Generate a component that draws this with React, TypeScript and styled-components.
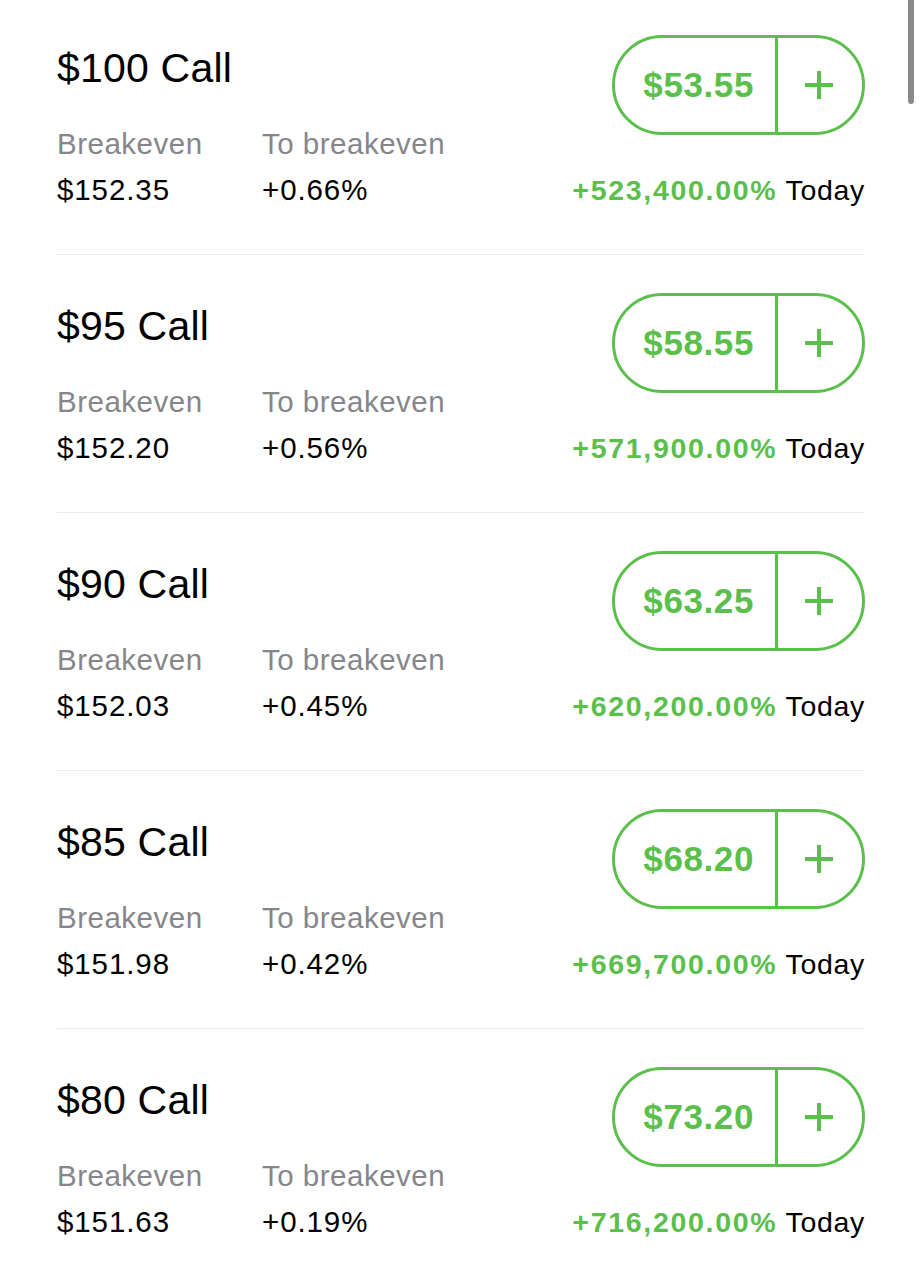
import React from 'react';
import styled, { createGlobalStyle } from 'styled-components';

const GlobalStyle = createGlobalStyle`
  body {
    margin: 0;
    background: #ffffff;
    font-family: 'Liberation Sans', Arial, sans-serif;
  }
`;

const GREEN = '#5bbf4b';

type Contract = {
  strike: string;
  breakeven: string;
  toBreakeven: string;
  price: string;
  change: string;
};

const contracts: Contract[] = [
  { strike: '$100', breakeven: '$152.35', toBreakeven: '+0.66%', price: '$53.55', change: '+523,400.00%' },
  { strike: '$95', breakeven: '$152.20', toBreakeven: '+0.56%', price: '$58.55', change: '+571,900.00%' },
  { strike: '$90', breakeven: '$152.03', toBreakeven: '+0.45%', price: '$63.25', change: '+620,200.00%' },
  { strike: '$85', breakeven: '$151.98', toBreakeven: '+0.42%', price: '$68.20', change: '+669,700.00%' },
  { strike: '$80', breakeven: '$151.63', toBreakeven: '+0.19%', price: '$73.20', change: '+716,200.00%' },
];

export default function App() {
  return (
    <Page>
      <GlobalStyle />
      <List>
        {contracts.map((c) => (
          <Row key={c.strike}>
            <Info>
              <Title>{c.strike} Call</Title>
              <Stats>
                <Label>Breakeven</Label>
                <Label>To breakeven</Label>
                <Value>{c.breakeven}</Value>
                <Value>{c.toBreakeven}</Value>
              </Stats>
            </Info>
            <Trade>
              <Pill>
                <Price>{c.price}</Price>
                <PlusButton aria-label="Add">
                  <svg width="30" height="30" viewBox="0 0 30 30">
                    <path d="M15 1v28M1 15h28" stroke={GREEN} strokeWidth="4" />
                  </svg>
                </PlusButton>
              </Pill>
              <Change>
                <Gain>{c.change}</Gain> Today
              </Change>
            </Trade>
          </Row>
        ))}
      </List>
      <Scrollbar />
    </Page>
  );
}

const Page = styled.div`
  position: relative;
  width: 922px;
  min-height: 1280px;
  overflow: hidden;
`;

const List = styled.div`
  padding: 0 57px;
`;

const Row = styled.div`
  display: flex;
  justify-content: space-between;
  padding: 35px 0 44px;

  & + & {
    border-top: 1px solid #ececec;
    padding-top: 38px;
  }
`;

const Info = styled.div`
  display: flex;
  flex-direction: column;
`;

const Title = styled.div`
  margin-top: 9px;
  font-size: 41px;
  line-height: 48px;
  letter-spacing: 0.2px;
  color: #000;
`;

const Stats = styled.div`
  display: grid;
  grid-template-columns: 205px auto;
  row-gap: 6px;
  margin-top: 32px;
`;

const Label = styled.div`
  font-size: 29.5px;
  line-height: 40px;
  letter-spacing: 0.5px;
  color: #86868a;
`;

const Value = styled.div`
  font-size: 29.5px;
  line-height: 40px;
  letter-spacing: 0.9px;
  color: #000;
`;

const Trade = styled.div`
  display: flex;
  flex-direction: column;
  align-items: flex-end;
`;

const Pill = styled.div`
  display: flex;
  height: 100px;
  box-sizing: border-box;
  border: 3px solid ${GREEN};
  border-radius: 50px;
`;

const Price = styled.div`
  display: flex;
  align-items: center;
  padding: 0 21px 0 28px;
  border-right: 3px solid ${GREEN};
  font-size: 35px;
  font-weight: 700;
  letter-spacing: 0.6px;
  color: ${GREEN};
`;

const PlusButton = styled.div`
  display: flex;
  align-items: center;
  justify-content: center;
  width: 82px;
  padding-right: 2px;
`;

const Change = styled.div`
  margin-top: 35px;
  font-size: 28.5px;
  line-height: 40px;
  letter-spacing: 0.7px;
  color: #000;
  white-space: nowrap;
`;

const Gain = styled.span`
  font-weight: 700;
  letter-spacing: 1.7px;
  color: ${GREEN};
`;

const Scrollbar = styled.div`
  position: absolute;
  top: -10px;
  right: 8px;
  width: 6px;
  height: 114px;
  border-radius: 3px;
  background: #8a8a8a;
`;
